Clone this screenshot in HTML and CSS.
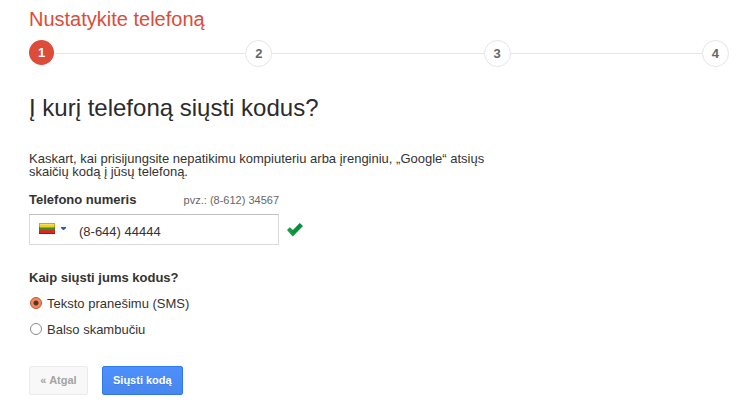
FILE: index.html
```html
<!DOCTYPE html>
<html lang="lt">
<head>
<meta charset="utf-8">
<meta name="viewport" content="width=device-width, initial-scale=1">
<title>Nustatykite telefoną</title>
<link rel="stylesheet" href="styles.css">
</head>
<body>
<main class="page">
  <h1 class="title">Nustatykite telefoną</h1>
  <div class="steps">
    <span class="step step-current">1</span>
    <span class="line"></span>
    <span class="step">2</span>
    <span class="line line-middle"></span>
    <span class="step">3</span>
    <span class="line"></span>
    <span class="step">4</span>
  </div>
  <h2 class="heading">Į kurį telefoną siųsti kodus?</h2>
  <p class="intro">Kaskart, kai prisijungsite nepatikimu kompiuteriu arba įrenginiu, „Google“ atsiųs skaičių kodą į jūsų telefoną.</p>
  <form>
    <div class="labels">
      <label class="label" for="phone">Telefono numeris</label>
      <span class="hint" id="phone-hint">pvz.: (8-612) 34567</span>
    </div>
    <div class="phone-row">
      <div class="phone-box">
        <button class="country" type="button" aria-label="Lietuva">
          <svg width="16" height="11" viewBox="0 0 16 11" aria-hidden="true">
            <path fill="#f5cf1b" d="M0 0h16v4H0z"/>
            <path fill="#1c9a36" d="M0 4h16v3H0z"/>
            <path fill="#d82a20" d="M0 7h16v4H0z"/>
            <path fill="#fff" opacity=".3" d="M1 1h14v1H1zM1 4h14v1H1z"/>
            <path fill="none" stroke="#7b4a10" stroke-opacity=".3" d="M.5.5h15v10H.5z"/>
            <path fill="#a31510" d="M0 10h16v1H0z"/>
          </svg>
          <svg width="5" height="3" viewBox="0 0 5 3" aria-hidden="true"><path fill="#2a5db0" d="M0 0h5v1L3 3H2L0 1z"/></svg>
        </button>
        <input class="phone" id="phone" type="tel" value="(8-644) 44444" aria-describedby="phone-hint">
      </div>
      <svg width="16" height="14" viewBox="0 0 16 14" aria-hidden="true">
        <defs><linearGradient id="tick"><stop offset="0" stop-color="#1fa74a"/><stop offset=".5" stop-color="#0a8f3c"/><stop offset="1" stop-color="#078a43"/></linearGradient></defs>
        <path fill="url(#tick)" d="M0 7 2.7 4.3 6 7 12.7 0 16 3 5.7 13.5z"/>
      </svg>
    </div>
    <fieldset class="choices">
      <legend class="label">Kaip siųsti jums kodus?</legend>
      <label class="choice"><input class="radio" type="radio" name="method" checked>Teksto pranešimu (SMS)</label>
      <label class="choice"><input class="radio" type="radio" name="method">Balso skambučiu</label>
    </fieldset>
    <div class="buttons">
      <button class="button button-back" type="button" disabled>« Atgal</button>
      <button class="button button-send" type="submit">Siųsti kodą</button>
    </div>
  </form>
</main>
</body>
</html>
```
FILE: styles.css
```css
* {
  box-sizing: border-box;
}

body {
  margin: 0;
  background: #fff;
  color: #333;
  font: 13px/16px "Liberation Sans", Arial, sans-serif;
}

.page {
  padding: 7px 11px 16px 29px;
}

.title {
  margin: 0 0 9px;
  color: #dd4b39;
  font-size: 20px;
  line-height: 24px;
  font-weight: normal;
}

.steps {
  display: flex;
  align-items: flex-start;
}

.step {
  width: 27px;
  height: 27px;
  border: 1px solid #e5e5e5;
  border-radius: 50%;
  color: #666;
  font-weight: bold;
  line-height: 25px;
  text-align: center;
}

.step-current {
  width: 25px;
  height: 25px;
  border: 0;
  background: #dd4b39;
  color: #fff;
}

.line {
  flex: 19;
  height: 1px;
  margin-top: 13px;
  background: #e5e5e5;
}

.line-middle {
  flex-grow: 21;
}

.heading {
  margin: 25px 0 28px;
  color: #2b2b2b;
  font-size: 24px;
  line-height: 32px;
  font-weight: normal;
}

.intro {
  max-width: 470px;
  margin: 0 0 14px;
  line-height: 13px;
}

.labels {
  display: flex;
  justify-content: space-between;
  max-width: 250px;
  margin-bottom: 6px;
}

.label {
  padding: 0;
  font-weight: bold;
}

.hint {
  color: #666;
  font-size: 11px;
}

.phone-row {
  display: flex;
  align-items: center;
  gap: 8px;
}

.phone-box {
  display: flex;
  flex: 0 1 250px;
  height: 31px;
  border: 1px solid #d9d9d9;
  border-top-color: #c0c0c0;
}

.country {
  display: flex;
  align-items: center;
  gap: 6px;
  padding: 0 12px 2px 9px;
  border: 0;
  background: none;
}

.phone {
  flex: 1;
  min-width: 0;
  padding: 4px 0 0 1px;
  border: 0;
  outline: 0;
  background: none;
  color: #333;
  font: inherit;
}

.choices {
  display: flex;
  flex-direction: column;
  align-items: flex-start;
  gap: 10px;
  margin: 25px 0 28px;
  padding: 0;
  border: 0;
}

.choices .label {
  margin-bottom: 10px;
}

.choice {
  display: flex;
  align-items: center;
  gap: 5px;
}

.radio {
  appearance: none;
  width: 12px;
  height: 12px;
  margin: 0 0 2px 1px;
  border: 1px solid #8a8a8a;
  border-radius: 50%;
  background: #fff;
}

.radio:checked {
  border-color: #c4502c;
  background: radial-gradient(circle, #5a3226 0 2px, #f08a60 3px);
}

.buttons {
  display: flex;
  gap: 14px;
}

.button {
  min-width: 59px;
  height: 29px;
  padding: 0 10px;
  border: 1px solid;
  border-radius: 2px;
  font: bold 11px/27px "Liberation Sans", Arial, sans-serif;
}

.button-back {
  border-color: #ebebeb;
  background: #f8f8f8;
  color: #a3a3a3;
}

.button-send {
  border-color: #3079ed;
  background: linear-gradient(#4d90fe, #4787ed);
  color: #fff;
  text-shadow: 0 1px rgba(0, 0, 0, 0.1);
}
```
